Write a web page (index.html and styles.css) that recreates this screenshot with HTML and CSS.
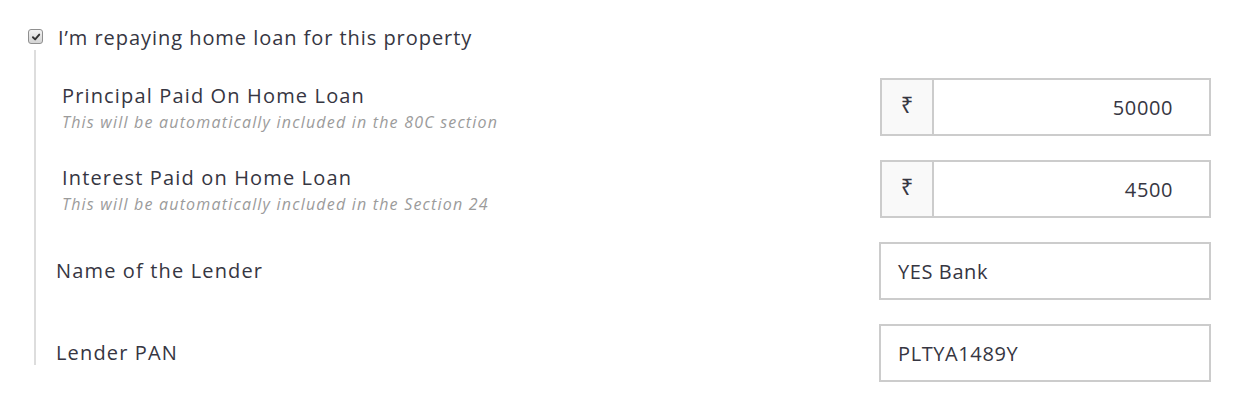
FILE: index.html
```html
<!DOCTYPE html>
<html>
<head>
<meta charset="utf-8">
<link rel="stylesheet" href="styles.css">
</head>
<body>
<div class="page">
  <div class="check-row">
    <span class="check" role="checkbox" aria-checked="true">
      <svg viewBox="0 0 14 14" width="14" height="14"><path d="M3.4 7.3 L6 9.8 L10.8 4.2" fill="none" stroke="#333" stroke-width="2.2" stroke-linecap="round" stroke-linejoin="round"/></svg>
    </span>
    <span class="check-label">I’m repaying home loan for this property</span>
  </div>
  <div class="section">
    <div class="rail"></div>
    <div class="rows">
      <div class="row">
        <div class="label-block indent">
          <div class="label">Principal Paid On Home Loan</div>
          <div class="hint">This will be automatically included in the 80C section</div>
        </div>
        <div class="field group">
          <span class="addon">₹</span>
          <span class="value right">50000</span>
        </div>
      </div>
      <div class="row">
        <div class="label-block indent">
          <div class="label">Interest Paid on Home Loan</div>
          <div class="hint">This will be automatically included in the Section 24</div>
        </div>
        <div class="field group">
          <span class="addon">₹</span>
          <span class="value right">4500</span>
        </div>
      </div>
      <div class="row">
        <div class="label-block">
          <div class="label">Name of the Lender</div>
        </div>
        <div class="field wide">
          <span class="value">YES Bank</span>
        </div>
      </div>
      <div class="row">
        <div class="label-block">
          <div class="label">Lender PAN</div>
        </div>
        <div class="field wide">
          <span class="value">PLTYA1489Y</span>
        </div>
      </div>
    </div>
  </div>
</div>
</body>
</html>
```

FILE: styles.css
```css
html, body {
  margin: 0;
  padding: 0;
  background: #ffffff;
}
body {
  font-family: "Open Sans", "Noto Sans", "DejaVu Sans", sans-serif;
  color: #363642;
}
.page {
  padding: 26px 35px 0 28px;
}
.check-row {
  display: flex;
  align-items: center;
  gap: 15px;
  height: 24px;
}
.check {
  flex: none;
  width: 15px;
  height: 15px;
  box-sizing: border-box;
  border: 1px solid #8f8f8f;
  border-radius: 3px;
  background: linear-gradient(#f2f2f2, #d4d4d4);
  display: flex;
  align-items: center;
  justify-content: center;
  margin-top: -3px;
}
.check svg {
  display: block;
  width: 12px;
  height: 12px;
}
.check-label {
  font-size: 20px;
  line-height: 24px;
  letter-spacing: 0.95px;
}
.section {
  display: flex;
  padding-left: 6px;
}
.rail {
  width: 2px;
  background: #dddddd;
  margin-bottom: 17px;
  flex: none;
}
.rows {
  flex: 1;
  display: flex;
  flex-direction: column;
  gap: 24px;
  padding-top: 28px;
}
.row {
  display: flex;
  align-items: center;
  justify-content: space-between;
  padding-left: 20px;
}
.label-block.indent {
  padding-left: 6px;
}
.label {
  font-size: 20px;
  line-height: 26px;
  letter-spacing: 1.15px;
}
.hint {
  margin-top: 3px;
  font-size: 16px;
  line-height: 20px;
  font-style: italic;
  color: #9b9b9b;
  letter-spacing: 1.2px;
}
.field {
  display: flex;
  height: 58px;
  box-sizing: border-box;
  border: 2px solid #cccccc;
  width: 331px;
  font-size: 20px;
  letter-spacing: 0.6px;
}
.field.wide {
  width: 332px;
}
.addon {
  flex: none;
  width: 52px;
  background: #f9f9f9;
  border-right: 2px solid #cccccc;
  display: flex;
  align-items: center;
  justify-content: center;
  padding-bottom: 6px;
  box-sizing: border-box;
  font-family: "Noto Sans", "DejaVu Sans", sans-serif;
  font-size: 22px;
  letter-spacing: 0;
}
.value {
  flex: 1;
  display: flex;
  align-items: center;
  padding: 0 17px;
}
.value.right {
  justify-content: flex-end;
  padding-right: 36px;
}
```
